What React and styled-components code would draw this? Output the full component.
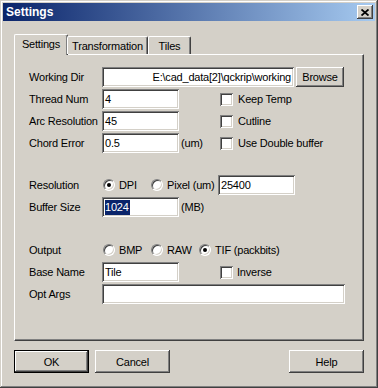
import React from 'react';
import styled, { createGlobalStyle } from 'styled-components';

const GlobalStyle = createGlobalStyle`
  html, body {
    margin: 0;
    padding: 0;
    background: #d4d0c8;
  }
  body {
    font-family: "Liberation Sans", Arial, sans-serif;
    font-size: 11px;
    letter-spacing: -0.2px;
    color: #000;
  }
`;

// classic 3d edges
const raised = `box-shadow: inset -1px -1px #404040, inset 1px 1px #ffffff, inset -2px -2px #808080, inset 2px 2px #d4d0c8;`;
const sunken = `box-shadow: inset 1px 1px #808080, inset -1px -1px #ffffff, inset 2px 2px #404040, inset -2px -2px #d4d0c8;`;

const Window = styled.div`
  box-sizing: border-box;
  width: 378px;
  height: 388px;
  padding: 3px;
  background: #d4d0c8;
  box-shadow: inset -1px -1px #404040, inset 1px 1px #d4d0c8, inset -2px -2px #808080, inset 2px 2px #ffffff;
  display: flex;
  flex-direction: column;
`;

const TitleBar = styled.div`
  height: 18px;
  display: flex;
  align-items: center;
  justify-content: space-between;
  padding: 0 2px 0 3px;
  background: linear-gradient(to right, #0a246a, #a6caf0);
  color: #fff;
  font-weight: bold;
  font-size: 12px;
  letter-spacing: 0;
`;

const CloseButton = styled.div`
  box-sizing: border-box;
  width: 16px;
  height: 14px;
  background: #d4d0c8;
  ${raised}
  display: flex;
  align-items: center;
  justify-content: center;
`;

const Body = styled.div`
  flex: 1;
  padding: 13px 11px 0;
  display: flex;
  flex-direction: column;
`;

const TabStrip = styled.div`
  display: flex;
  align-items: flex-end;
  height: 20px;
  padding-left: 2px;
  position: relative;
  z-index: 1;
`;

const Tab = styled.div`
  box-sizing: border-box;
  width: ${p => p.$w}px;
  height: ${p => (p.$active ? 21 : 18)}px;
  margin: 0 ${p => (p.$active ? '-1px -1px -2px' : '0 0 0')};
  padding-bottom: ${p => (p.$active ? 2 : 0)}px;
  border-top: 1px solid #fff;
  border-left: 1px solid #fff;
  border-right: 1px solid #404040;
  border-radius: 2px 2px 0 0;
  box-shadow: inset -1px 0 #808080;
  background: #d4d0c8;
  display: flex;
  align-items: center;
  justify-content: center;
`;

const Panel = styled.div`
  box-sizing: border-box;
  height: 287px;
  border-top: 1px solid #fff;
  border-left: 1px solid #fff;
  border-right: 1px solid #404040;
  border-bottom: 1px solid #404040;
  box-shadow: inset -1px -1px #808080;
  padding: 11px 0 0 14px;
  display: flex;
  flex-direction: column;
`;

const Row = styled.div`
  height: 22px;
  display: flex;
  align-items: center;
`;

const Spacer = styled.div`
  height: ${p => p.$h}px;
`;

const Label = styled.div`
  width: 73px;
  flex: none;
`;

const Slot = styled.div`
  width: 118px;
  flex: none;
  display: flex;
  align-items: center;
`;

const Field = styled.div`
  box-sizing: border-box;
  width: ${p => p.$w}px;
  height: 20px;
  flex: none;
  padding: 0 3px;
  background: #fff;
  ${sunken}
  display: flex;
  align-items: center;
  justify-content: ${p => (p.$right ? 'flex-end' : 'flex-start')};
  white-space: nowrap;
  overflow: hidden;
`;

const Selected = styled.span`
  background: #0a246a;
  color: #fff;
  line-height: 15px;
  padding-right: 1px;
`;

const Unit = styled.span`
  margin-left: 2px;
`;

const Button = styled.div`
  box-sizing: border-box;
  width: ${p => p.$w}px;
  height: ${p => p.$h}px;
  margin-left: ${p => p.$ml || 0}px;
  background: #d4d0c8;
  ${raised}
  display: flex;
  align-items: center;
  justify-content: center;
  flex: none;
`;

const DefaultButton = styled(Button)`
  border: 1px solid #000;
`;

const Check = styled.label`
  display: flex;
  align-items: center;
  gap: ${p => p.$gap || 5}px;
`;

const Box = styled.span`
  box-sizing: border-box;
  width: 13px;
  height: 13px;
  background: #fff;
  ${sunken}
`;

const Option = styled.label`
  width: ${p => (p.$w ? `${p.$w}px` : 'auto')};
  flex: none;
  display: flex;
  align-items: center;
  gap: 4px;
  padding-left: 1px;
  box-sizing: border-box;
`;

const Radio = styled.span`
  box-sizing: border-box;
  width: 12px;
  height: 12px;
  border-radius: 50%;
  border: 1px solid;
  border-color: #808080 #ffffff #ffffff #808080;
  box-shadow: inset 1px 1px #404040, inset -1px -1px #d4d0c8;
  background: #fff;
  display: flex;
  align-items: center;
  justify-content: center;
  &::after {
    content: '';
    width: 4px;
    height: 4px;
    border-radius: 50%;
    background: ${p => (p.$on ? '#000' : 'transparent')};
  }
`;

const ButtonBar = styled.div`
  display: flex;
  margin-top: 9px;
`;

const Push = styled.div`
  flex: 1;
`;

const CloseGlyph = () => (
  <svg width="8" height="7" viewBox="0 0 8 7">
    <path d="M0.5 0.5 L7.5 6.5 M7.5 0.5 L0.5 6.5" stroke="#000" strokeWidth="1.8" fill="none" />
  </svg>
);

export default function App() {
  return (
    <>
      <GlobalStyle />
      <Window>
        <TitleBar>
          <span>Settings</span>
          <CloseButton>
            <CloseGlyph />
          </CloseButton>
        </TitleBar>
        <Body>
          <TabStrip>
            <Tab $active $w={54}>Settings</Tab>
            <Tab $w={81}>Transformation</Tab>
            <Tab $w={43}>Tiles</Tab>
          </TabStrip>
          <Panel>
            <Row>
              <Label>Working Dir</Label>
              <Field $w={192} $right>E:\cad_data[2]\qckrip\working</Field>
              <Button $w={48} $h={20} $ml={2}>Browse</Button>
            </Row>
            <Row>
              <Label>Thread Num</Label>
              <Slot><Field $w={77}>4</Field></Slot>
              <Check><Box />Keep Temp</Check>
            </Row>
            <Row>
              <Label>Arc Resolution</Label>
              <Slot><Field $w={77}>45</Field></Slot>
              <Check><Box />Cutline</Check>
            </Row>
            <Row>
              <Label>Chord Error</Label>
              <Slot><Field $w={77}>0.5</Field><Unit>(um)</Unit></Slot>
              <Check><Box />Use Double buffer</Check>
            </Row>
            <Spacer $h={20} />
            <Row>
              <Label>Resolution</Label>
              <Option $w={48}><Radio $on />DPI</Option>
              <Option $w={68}><Radio />Pixel (um)</Option>
              <Field $w={77}>25400</Field>
            </Row>
            <Row>
              <Label>Buffer Size</Label>
              <Field $w={77}><Selected>1024</Selected></Field>
              <Unit>(MB)</Unit>
            </Row>
            <Spacer $h={21} />
            <Row>
              <Label>Output</Label>
              <Option $w={48}><Radio />BMP</Option>
              <Option $w={48}><Radio />RAW</Option>
              <Option><Radio $on />TIF (packbits)</Option>
            </Row>
            <Row>
              <Label>Base Name</Label>
              <Slot><Field $w={77}>Tile</Field></Slot>
              <Check $gap={4}><Box />Inverse</Check>
            </Row>
            <Row>
              <Label>Opt Args</Label>
              <Field $w={243} />
            </Row>
          </Panel>
          <ButtonBar>
            <DefaultButton $w={75} $h={23}>OK</DefaultButton>
            <Button $w={75} $h={23} $ml={6}>Cancel</Button>
            <Push />
            <Button $w={75} $h={23}>Help</Button>
          </ButtonBar>
        </Body>
      </Window>
    </>
  );
}
